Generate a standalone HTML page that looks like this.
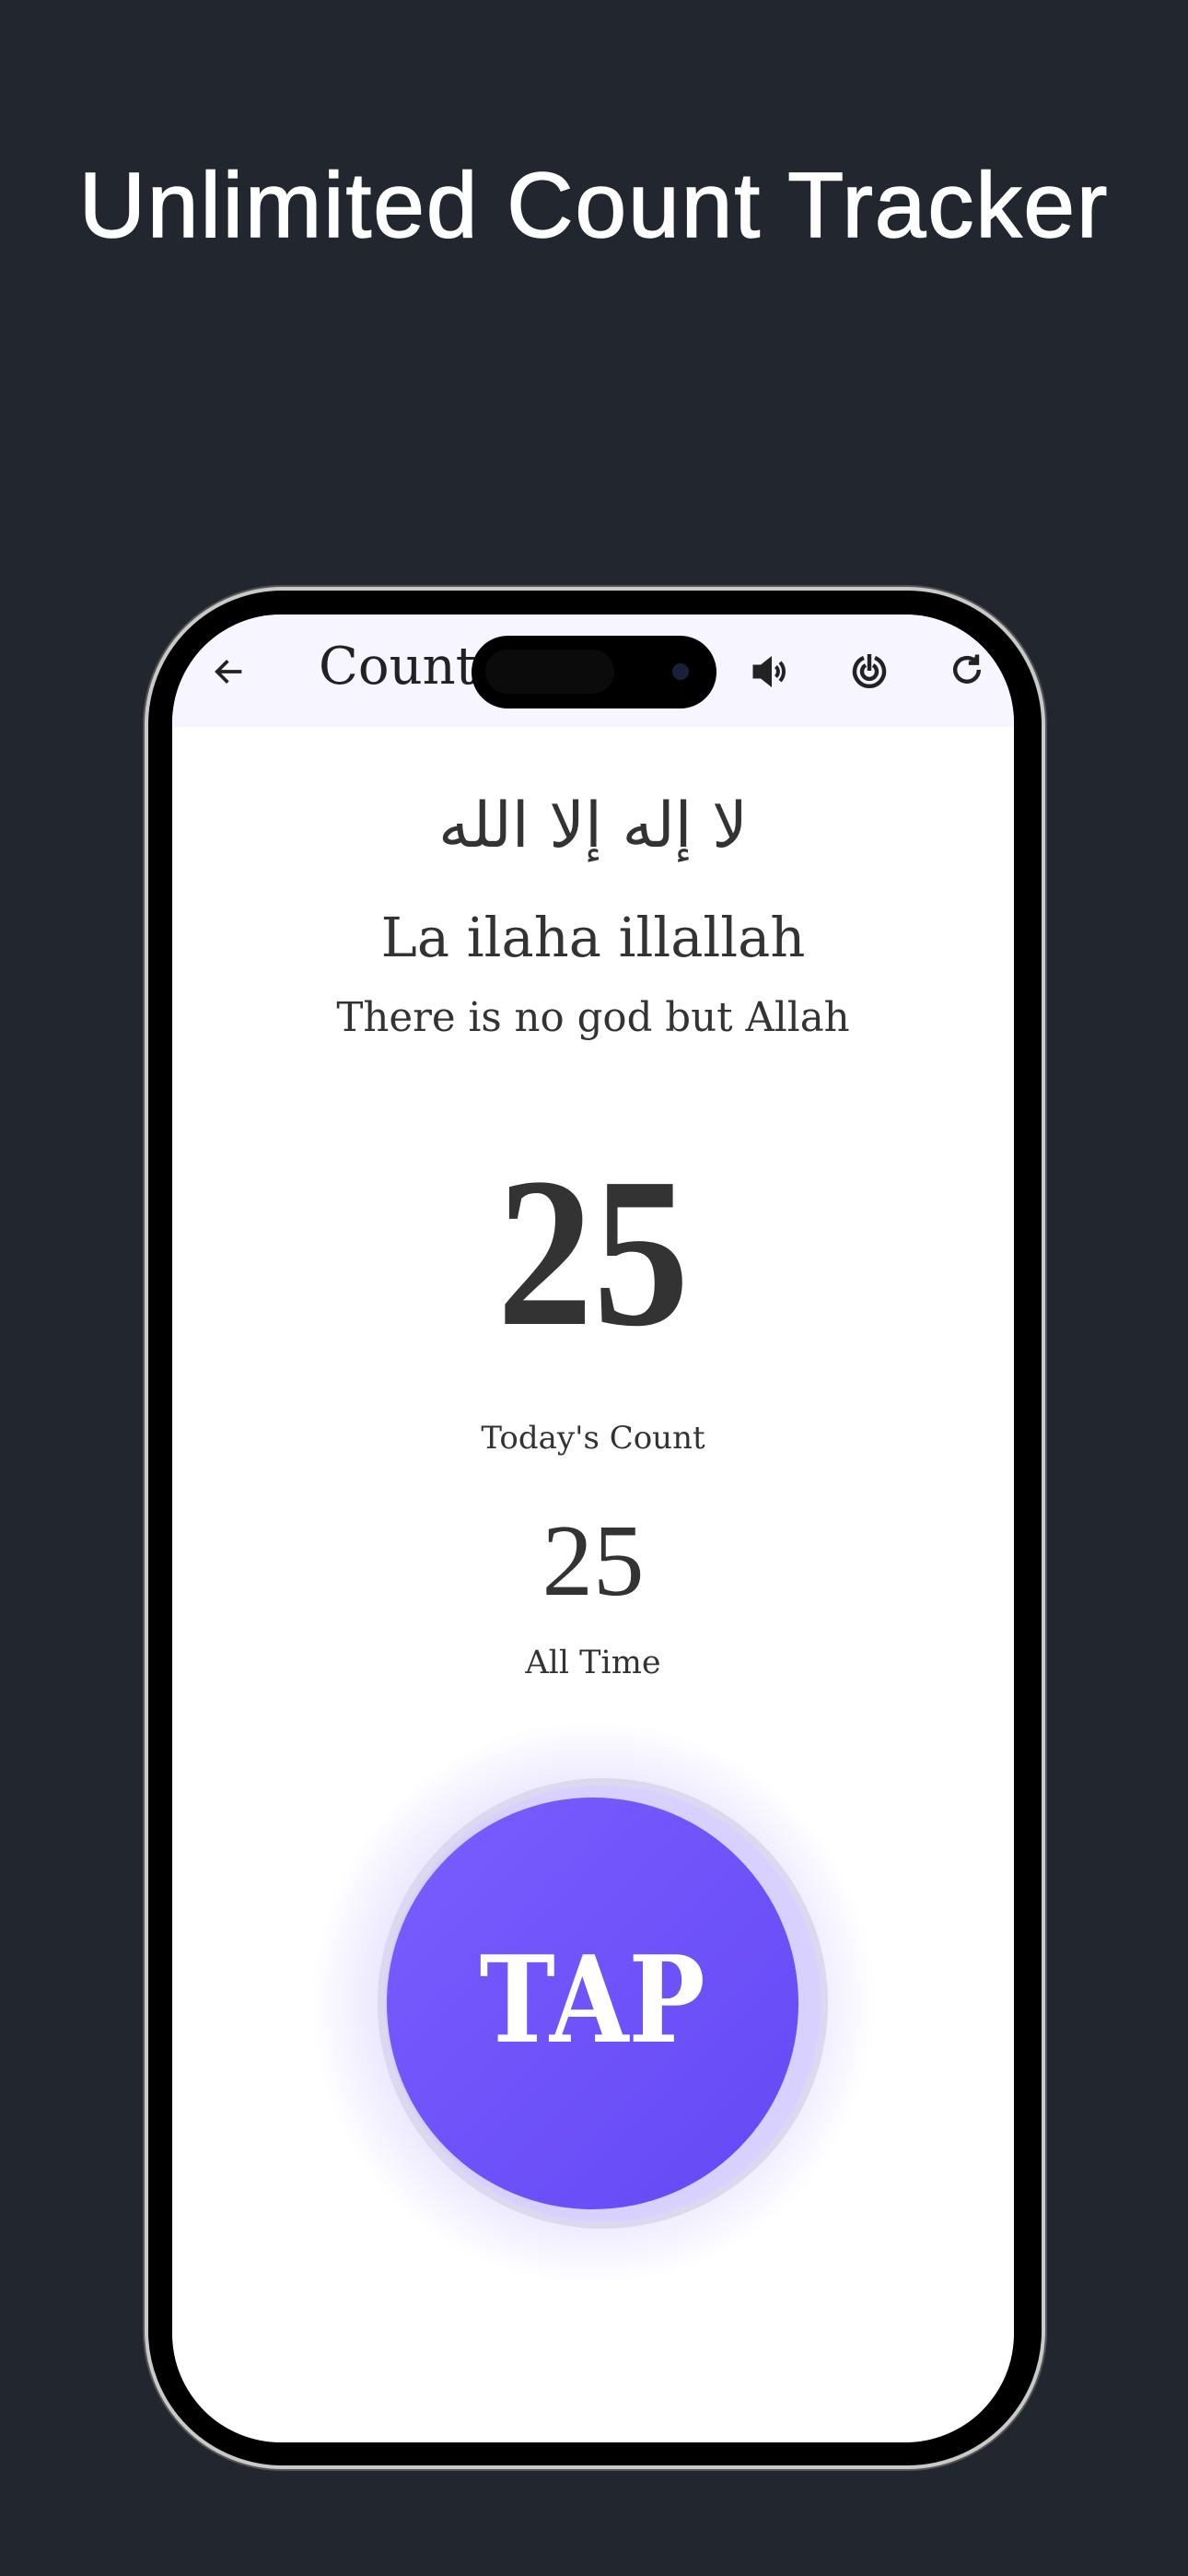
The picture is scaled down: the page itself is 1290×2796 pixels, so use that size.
<!DOCTYPE html>
<html><head><meta charset="utf-8"><style>
*{margin:0;padding:0;box-sizing:border-box}
html,body{width:1290px;height:2796px;background:#22262e;overflow:hidden;position:relative;font-family:"DejaVu Serif","Liberation Serif",serif}
.title{position:absolute;top:166px;left:0;width:1290px;text-align:center;color:#fff;font-family:"Liberation Sans",sans-serif;font-size:100px;letter-spacing:2px;-webkit-text-stroke:1.5px #fff}
.phone{position:absolute;left:157px;top:637px;width:978px;height:2043px;border-radius:150px;background:#000;border:4px solid #c9c9c9;box-shadow:0 0 0 2px #555}
.screen{position:absolute;left:187px;top:667px;width:914px;height:1984px;border-radius:118px;background:#fff;overflow:hidden}
.bar{position:absolute;left:0;top:0;width:100%;height:122px;background:#f7f5ff}
.island{position:absolute;left:512px;top:690px;width:266px;height:79px;border-radius:40px;background:#000}
.c{position:absolute;left:0;width:914px;text-align:center;color:#333}
.btn-glow{position:absolute;width:620px;height:620px;border-radius:50%;background:radial-gradient(circle,rgba(120,90,255,.35) 35%,rgba(120,90,255,.12) 55%,rgba(255,255,255,0) 70%)}
.ring1{position:absolute;left:223px;top:1263px;width:489px;height:489px;border-radius:50%;background:#dcd8f0}
.ring2{position:absolute;left:231px;top:1271px;width:473px;height:473px;border-radius:50%;background:#d8d0ff}
.btn{position:absolute;left:233px;top:1284px;width:447px;height:447px;border-radius:50%;background:linear-gradient(135deg,#7b5eff,#6448f4);color:#fff;font-weight:bold;font-size:130px;text-align:center;line-height:440px}
.btn span{display:inline-block;transform:scaleX(.85)}
</style></head><body>
<div class="title">Unlimited Count Tracker</div>
<div class="phone"></div>
<div class="screen">
 <div class="bar"></div>
 <svg style="position:absolute;left:42px;top:42px" width="40" height="40" viewBox="0 0 24 24" fill="none" stroke="#222" stroke-width="2.2"><path d="M20 12H5M11 5l-7 7 7 7"/></svg>
 <div style="position:absolute;left:159px;top:24px;font-size:56px;color:#222">Counter</div>
 <svg style="position:absolute;left:627px;top:40px" width="44" height="44" viewBox="0 0 24 24" fill="none" stroke="#222" stroke-width="2.2"><path d="M3 9h4l5-4v14l-5-4H3z" fill="#222"/><path d="M15.5 9a4 4 0 010 6M18 6.5a8 8 0 010 11"/></svg>
 <svg style="position:absolute;left:733px;top:36px" width="48" height="50" viewBox="0 0 24 24" fill="none" stroke="#222" stroke-width="2.2"><path d="M9 5a8 8 0 106 0"/><path d="M10 9a4 4 0 104 0"/><path d="M12 3v9"/></svg>
 <svg style="position:absolute;left:841px;top:38px" width="44" height="44" viewBox="0 0 24 24" fill="none" stroke="#222" stroke-width="2.4"><path d="M19 12a7 7 0 11-2.5-5.4"/><path d="M18 3v5h-5" fill="#222"/></svg>
 <div class="c" style="top:190px;font-size:68px;font-family:'DejaVu Sans',sans-serif">لا إله إلا الله</div>
 <div class="c" style="top:316px;font-size:59px">La ilaha illallah</div>
 <div class="c" style="top:413px;font-size:43.5px">There is no god but Allah</div>
 <div class="c" style="top:577px;font-size:232px;font-weight:bold;line-height:1;font-family:'Liberation Serif',serif"><span style="display:inline-block;transform:scaleX(.9)">25</span></div>
 <div class="c" style="top:874px;font-size:34px">Today's Count</div>
 <div class="c" style="top:972px;font-size:111px;line-height:1;font-family:'Liberation Serif',serif">25</div>
 <div class="c" style="top:1118px;font-size:35px">All Time</div>
 <div class="btn-glow" style="left:147px;top:1197px"></div>
 <div class="ring1"></div><div class="ring2"></div>
 <div class="btn"><span>TAP</span></div>
</div>
<div class="island"></div>
<div style="position:absolute;left:527px;top:705px;width:140px;height:48px;border-radius:24px;background:#0b0b0b"></div>
<div style="position:absolute;left:730px;top:720px;width:18px;height:18px;border-radius:50%;background:#1a1f3a"></div>
</body></html>
